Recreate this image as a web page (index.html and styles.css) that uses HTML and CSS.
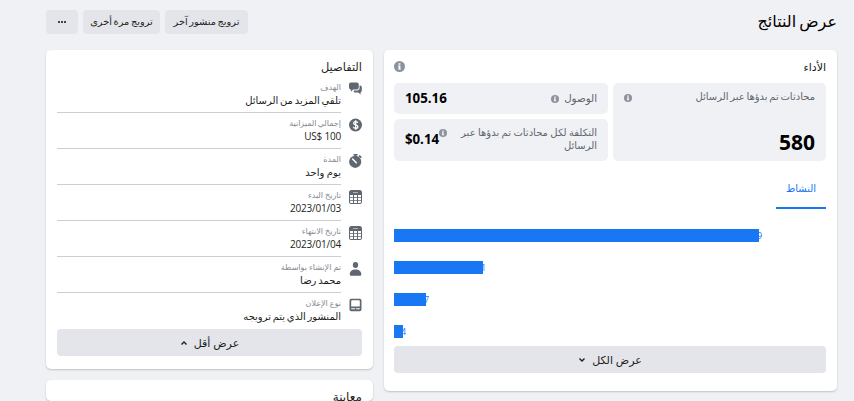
FILE: index.html
```html
<!DOCTYPE html>
<html lang="ar" dir="rtl">
<head>
<meta charset="utf-8">
<title>عرض النتائج</title>
<link rel="stylesheet" href="styles.css">
</head>
<body>
<svg width="0" height="0" class="defs">
  <symbol id="info" viewBox="0 0 12 12"><circle cx="6" cy="6" r="6" fill="#8c939d"/><path d="M5 2.4h2v1.7H5zM4.5 5H7v3.4h.6v1H4.4v-1H5V6h-.5z" fill="#fff"/></symbol>
  <symbol id="cal" viewBox="0 0 13 14"><path fill="#606770" fill-rule="evenodd" d="M2.500 0h8A2.500 2.500 0 0 1 13 2.500V12a2 2 0 0 1-2 2H2a2 2 0 0 1-2-2V2.500A2.500 2.500 0 0 1 2.500 0zM1 5v2.200h3V5zm4 0v2.200h3V5zm4 0v2.200h3V5zM1 8v2.200h3V8zm4 0v2.200h3V8zm4 0v2.200h3V8zM1 11v1a1 1 0 0 0 1 1h2v-2zm4 0v2h3v-2zm4 0v2h2a1 1 0 0 0 1-1v-1z"/><path d="M4 2.500h5" stroke="#aeb2b8"/></symbol>
</svg>
<header class="top">
  <h1>عرض النتائج</h1>
  <div class="actions">
    <button class="btn b1"><span>ترويج منشور آخر</span></button>
    <button class="btn b2"><span>ترويج مرة أخرى</span></button>
    <button class="btn b3"><svg width="10" height="4" viewBox="0 0 10 4"><path d="M1 1h2v2H1zM4 1h2v2H4zM7 1h2v2H7z" fill="#444"/></svg></button>
  </div>
</header>
<main class="cols">
  <section class="card perf">
    <div class="head"><h2>الأداء</h2><svg width="11" height="11"><use href="#info"/></svg></div>
    <div class="stats">
      <div class="stat big"><div class="row"><span class="tight">محادثات تم بدؤها عبر الرسائل</span><svg width="8" height="8"><use href="#info"/></svg></div><b>580</b></div>
      <div class="stat reach"><span class="reach-label">الوصول</span><svg width="8" height="8"><use href="#info"/></svg><b>105.16</b></div>
      <div class="stat cost"><div class="cost-label"><span>التكلفة لكل محادثات تم بدؤها عبر</span><span>الرسائل</span></div><svg width="8" height="8"><use href="#info"/></svg><b>$0.14</b></div>
    </div>
    <div class="tab">النشاط</div>
    <div class="chart">
      <div class="bar"><i style="width:365px"></i><em>9</em></div>
      <div class="bar"><i style="width:89px"></i><em>1</em></div>
      <div class="bar"><i style="width:32px"></i><em>7</em></div>
      <div class="bar"><i style="width:9px"></i><em>4</em></div>
    </div>
    <button class="wide all"><span>عرض الكل</span><svg width="8" height="6" viewBox="0 0 8 6"><path d="M1.500 1.500 4 4l2.500-2.500" fill="none" stroke="#1c1e21" stroke-width="1.400"/></svg></button>
  </section>
  <div class="side">
    <section class="card details">
      <h2>التفاصيل</h2>
      <ul>
        <li><svg width="13" height="14" viewBox="0 0 14 14"><path fill="#606770" d="M2 0h6.500a2 2 0 0 1 2 2v3.500a2 2 0 0 1-2 2H4.500L2 10V7.500a2 2 0 0 1-2-2V2a2 2 0 0 1 2-2zM11.400 3.300H12a1.800 1.800 0 0 1 1.800 1.800v3.500A1.800 1.800 0 0 1 12.500 10.400V13L10 10.800H7A1.800 1.800 0 0 1 5.200 8.500h3.400a2.800 2.800 0 0 0 2.800-2.800z"/></svg><div><small>الهدف</small><p class="tight">تلقي المزيد من الرسائل</p></div></li>
        <li><svg width="13" height="14" viewBox="0 0 13 14"><circle cx="6.500" cy="7" r="6.500" fill="#606770"/><path d="M8.700 4.800C8.500 3.900 7.700 3.600 6.700 3.600c-1.200 0-2 .6-2 1.600 0 2.300 4.200 1.200 4.200 3.500 0 1-.9 1.700-2.200 1.700s-2.100-.6-2.300-1.600M6.700 2.300v9.400" fill="none" stroke="#fff" stroke-width="1.300"/></svg><div><small class="tight">إجمالي الميزانية</small><p class="num" dir="ltr">US$ 100</p></div></li>
        <li><svg width="13" height="14" viewBox="0 0 13 14"><circle cx="6.200" cy="7.800" r="6.100" fill="#606770"/><path d="M4.500 0h4v1.500h-4zM10.600 1l2.300 2-1.200 1.300-2.300-2zM5.500 1h2v2h-2z" fill="#606770"/><path d="M3.600 5 7.300 8.800" stroke="#fff" stroke-width="1.500" stroke-linecap="round"/></svg><div><small>المدة</small><p>يوم واحد</p></div></li>
        <li><svg width="13" height="14"><use href="#cal"/></svg><div><small>تاريخ البدء</small><p class="num">2023/01/03</p></div></li>
        <li><svg width="13" height="14"><use href="#cal"/></svg><div><small>تاريخ الانتهاء</small><p class="num">2023/01/04</p></div></li>
        <li><svg width="13" height="14" viewBox="0 0 13 14"><ellipse cx="6.500" cy="3" rx="2.700" ry="3" fill="#606770"/><path d="M.8 12.500C.8 9 3 7.500 6.500 7.500s5.800 1.500 5.800 5q0 1.300-1.200 1.300H2q-1.200 0-1.200-1.300z" fill="#606770"/></svg><div><small>تم الإنشاء بواسطة</small><p class="tight">محمد رضا</p></div></li>
        <li><svg width="13" height="14" viewBox="0 0 13 14"><path fill="#606770" fill-rule="evenodd" d="M2.200.8h8.600a1.700 1.700 0 0 1 1.700 1.700v9.100a1.700 1.700 0 0 1-1.700 1.700H2.200a1.700 1.700 0 0 1-1.700-1.700V2.500A1.700 1.700 0 0 1 2.200.8zM3 2.300a.8.8 0 0 0-.8.8v5.400h8.600V3.100A.8.800 0 0 0 10 2.300zM2.200 10.300v1h4v-1zm5 0v1h3.600v-1z"/></svg><div><small>نوع الإعلان</small><p class="tight">المنشور الذي يتم ترويجه</p></div></li>
      </ul>
      <button class="wide"><span>عرض أقل</span><svg width="8" height="6" viewBox="0 0 8 6"><path d="M1.500 4.500 4 2l2.500 2.500" fill="none" stroke="#1c1e21" stroke-width="1.400"/></svg></button>
    </section>
    <section class="card preview"><h2>معاينة</h2></section>
  </div>
</main>
</body>
</html>
```
FILE: styles.css
```css
* { box-sizing: border-box; margin: 0; padding: 0; }
html, body { height: 401px; overflow: hidden; }
body { background: #f0f1f5; color: #1c1e21; font: 10px "Open Sans", "DejaVu Sans", sans-serif; padding: 10px 17px 0 46px; }
.defs { display: block; }
svg { flex: none; }
span, small, p { white-space: nowrap; }
button { border: 0; background: #e4e5ea; color: #1c1e21; font: inherit; border-radius: 4px; display: flex; align-items: center; justify-content: center; }
.tight { word-spacing: -.9px; }
.top { display: flex; justify-content: space-between; height: 40px; }
h1 { font-size: 16px; font-weight: 400; line-height: 23px; color: #000; word-spacing: -1px; }
.actions { display: flex; gap: 5px; height: 24px; }
.btn { font-size: 9.800px; word-spacing: -1px; padding-bottom: 1px; }
.b1 { width: 83px; }
.b2 { width: 77px; }
.b3 { width: 32px; }
.cols { display: grid; grid-template-columns: 453px 327px; gap: 11px; align-items: start; }
.card { background: #fff; border-radius: 5px; box-shadow: 0 1px 2px rgba(0, 0, 0, .2); padding: 0 11px; }
.perf { height: 341px; padding-left: 10px; }
.head { height: 33px; display: flex; align-items: center; justify-content: space-between; }
h2 { font-size: 11px; font-weight: 400; line-height: 33px; }
.stats { display: grid; grid-template-columns: 213px 214px; grid-template-rows: 31px 42px; gap: 5px; }
.stat { background: #f0f1f5; border-radius: 5px; display: flex; align-items: center; padding: 0 11px; color: #606770; }
.stat b { color: #000; font-size: 13.300px; margin-right: auto; line-height: 16px; direction: ltr; }
.stat.big { grid-row: span 2; flex-direction: column; align-items: stretch; padding: 4px 11px 0; }
.big .row { display: flex; justify-content: space-between; align-items: center; height: 17px; }
.big .row svg { margin-top: 4px; }
.stat.big b { font-size: 21px; line-height: 24px; margin: 26px 0 0; text-align: right; }
.reach svg { margin: 0 5px 0 0; }
.reach span { margin-top: -2px; font-size: 10.300px; }
.reach b { margin-top: -1px; }
.cost b { margin-top: -2px; }
.cost-label { display: flex; flex-direction: column; line-height: 13px; width: 136px; margin-top: -2px; word-spacing: -.2px; }
.cost svg { margin: 0 14px 14px 0; }
.tab { width: 50px; height: 48px; padding-top: 15px; line-height: 24px; text-align: center; color: #1877f2; border-bottom: 2px solid #1877f2; }
.chart { direction: ltr; padding-top: 20px; height: 137px; }
.bar { display: flex; height: 32px; }
.bar i { height: 13px; background: #1877f2; }
.bar em { font: 9px/13px "Open Sans", sans-serif; color: #1877f2; margin: 0 0 0 -2px; }
.wide { width: 100%; height: 27px; gap: 6px; font-size: 11px; padding-bottom: 1px; }
.wide svg { margin-top: 2px; }
.details { height: 319px; }
.details h2 { height: 27px; font-size: 11.400px; }
.side { display: grid; gap: 11px; }
ul { list-style: none; }
li { display: flex; gap: 8px; height: 36px; }
li svg { margin-top: 5px; }
li div { flex: 1; border-bottom: 1px solid #ccced2; }
li:last-child div { border: 0; }
small { display: block; width: max-content; font-size: 8px; line-height: 13px; padding-top: 3px; color: #858990; }
p { width: max-content; font-size: 10px; line-height: 14px; }
.num { letter-spacing: -.2px; }
.preview { height: 21px; }
.preview h2 { font-size: 12px; }
```
